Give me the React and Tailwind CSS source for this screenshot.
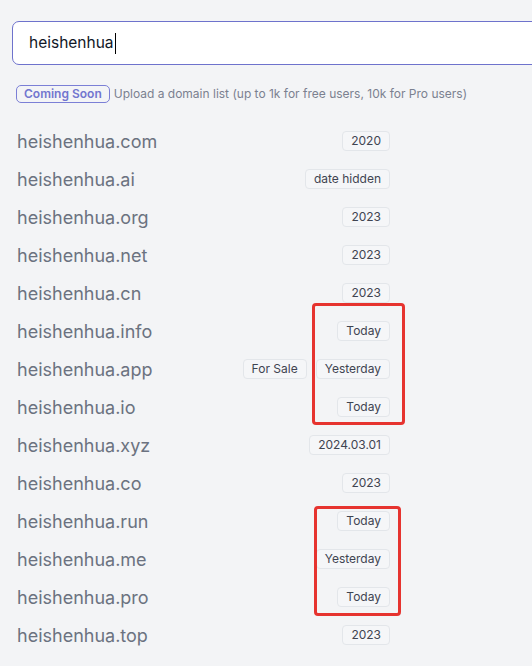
const rows = [
  { name: "heishenhua.com", tags: ["2020"] },
  { name: "heishenhua.ai", tags: ["date hidden"] },
  { name: "heishenhua.org", tags: ["2023"] },
  { name: "heishenhua.net", tags: ["2023"] },
  { name: "heishenhua.cn", tags: ["2023"] },
  { name: "heishenhua.info", tags: ["Today"] },
  { name: "heishenhua.app", tags: ["For Sale", "Yesterday"] },
  { name: "heishenhua.io", tags: ["Today"] },
  { name: "heishenhua.xyz", tags: ["2024.03.01"] },
  { name: "heishenhua.co", tags: ["2023"] },
  { name: "heishenhua.run", tags: ["Today"] },
  { name: "heishenhua.me", tags: ["Yesterday"] },
  { name: "heishenhua.pro", tags: ["Today"] },
  { name: "heishenhua.top", tags: ["2023"] },
]

export default function App() {
  return (
    <div
      className="relative w-[532px] h-[666px] overflow-hidden bg-[#f3f4f6]"
      style={{ fontFamily: "Inter, 'Noto Sans', sans-serif" }}
    >
      <div className="pt-[21px] pl-[12px]">
        <div className="w-[560px] h-[44px] rounded-[7px] border border-[#6e72cc] bg-white flex items-center pl-[16px]">
          <span className="text-[15.5px] text-[#111827]">heishenhua</span>
          <span className="w-px h-[21px] bg-black ml-px"></span>
        </div>
      </div>

      <div className="flex items-center pl-[16px] mt-[20px]">
        <span className="h-[18px] px-[7px] rounded-[5px] border border-[#7b7fd6] text-[#7276cf] text-[12px] font-semibold flex items-center leading-none">
          Coming Soon
        </span>
        <span className="ml-[4px] text-[12px] text-[#7b8190]">
          Upload a domain list (up to 1k for free users, 10k for Pro users)
        </span>
      </div>

      <div className="mt-[19px] w-[390px] pl-[17px] flex flex-col">
        {rows.map((r) => (
          <div key={r.name} className="h-[38px] flex items-center justify-between">
            <span className="text-[18px] text-[#6b7280]">{r.name}</span>
            <div className="flex gap-[9px]">
              {r.tags.map((t) => (
                <span
                  key={t}
                  className="h-[20px] px-[8px] rounded-[4px] border border-[#e3e6ea] bg-[#f5f6f8] text-[12px] text-[#3f4451] flex items-center leading-none"
                >
                  {t}
                </span>
              ))}
            </div>
          </div>
        ))}
      </div>

      <div className="absolute left-[312px] top-[303px] w-[93px] h-[122px] border-[3px] border-[#e6332f] rounded-[4px]"></div>
      <div className="absolute left-[314px] top-[506px] w-[87px] h-[110px] border-[3px] border-[#e6332f] rounded-[4px]"></div>
    </div>
  )
}
